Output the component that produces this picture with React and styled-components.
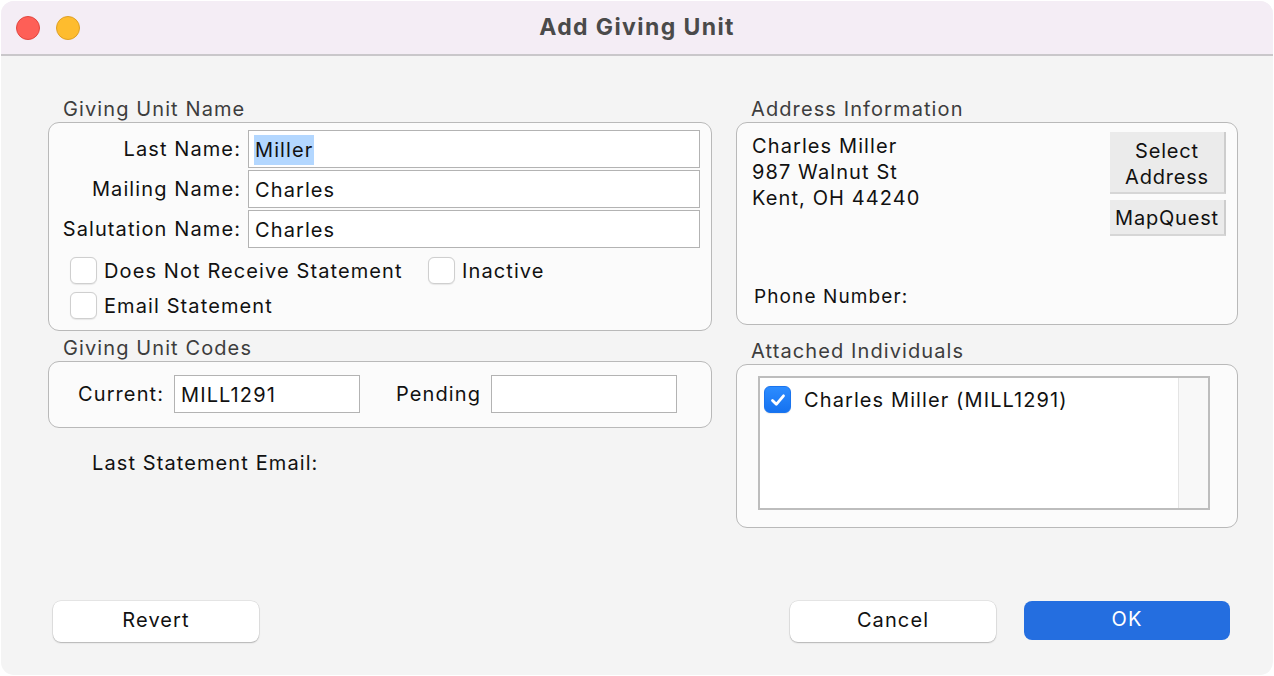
import React from "react";
import styled, { createGlobalStyle } from "styled-components";

const GlobalStyle = createGlobalStyle`
  html, body {
    margin: 0;
    padding: 0;
    background: #ffffff;
  }
  body {
    font-family: Inter, "Liberation Sans", sans-serif;
    color: #111;
    letter-spacing: 1.1px;
  }
`;

export default function App() {
  return (
    <>
      <GlobalStyle />
      <Window>
        <TitleBar>
          <Lights>
            <Light color="#fe5f57" edge="#e2463f" />
            <Light color="#febc2e" edge="#dfa024" />
          </Lights>
          <Title>Add Giving Unit</Title>
        </TitleBar>
        <Body>
          <Columns>
            <Column>
              <Group>
                <Legend>Giving Unit Name</Legend>
                <Box pad="7px 11px 11px 13px">
                  <NameGrid>
                    <FieldLabel>Last Name:</FieldLabel>
                    <TextField>
                      <Selected>Miller</Selected>
                    </TextField>
                    <FieldLabel>Mailing Name:</FieldLabel>
                    <TextField>Charles</TextField>
                    <FieldLabel>Salutation Name:</FieldLabel>
                    <TextField>Charles</TextField>
                  </NameGrid>
                  <CheckGrid>
                    <CheckItem>
                      <CheckBox />
                      <span>Does Not Receive Statement</span>
                    </CheckItem>
                    <CheckItem>
                      <CheckBox />
                      <span>Inactive</span>
                    </CheckItem>
                    <CheckItem>
                      <CheckBox />
                      <span>Email Statement</span>
                    </CheckItem>
                  </CheckGrid>
                </Box>
              </Group>
              <Group top="4px">
                <Legend>Giving Unit Codes</Legend>
                <Box pad="13px 0 14px 29px">
                  <CodeRow>
                    <CodeLabel>Current:</CodeLabel>
                    <TextField width="186px">MILL1291</TextField>
                    <CodeLabel gap="36px">Pending</CodeLabel>
                    <TextField width="186px" />
                  </CodeRow>
                </Box>
              </Group>
              <Note>Last Statement Email:</Note>
            </Column>

            <Column>
              <Group>
                <Legend>Address Information</Legend>
                <Box pad="9px 11px 16px 15px">
                  <AddressTop>
                    <AddressText>
                      <div>Charles Miller</div>
                      <div>987 Walnut St</div>
                      <div>Kent, OH 44240</div>
                    </AddressText>
                    <SideButtons>
                      <FlatButton h="62px" lift="4px">
                        Select
                        <br />
                        Address
                      </FlatButton>
                      <FlatButton h="36px" lift="2px">
                        MapQuest
                      </FlatButton>
                    </SideButtons>
                  </AddressTop>
                  <Phone>Phone Number:</Phone>
                </Box>
              </Group>
              <Group top="13px">
                <Legend>Attached Individuals</Legend>
                <Box pad="11px 27px 17px 21px">
                  <ListBox>
                    <ListItems>
                      <ListRow>
                        <CheckBox checked>
                          <svg width="20" height="20" viewBox="0 0 20 20">
                            <path
                              d="M4.5 10.5 L8.3 14.3 L15.5 5.8"
                              fill="none"
                              stroke="#fff"
                              strokeWidth="2.8"
                              strokeLinecap="round"
                              strokeLinejoin="round"
                            />
                          </svg>
                        </CheckBox>
                        <span>Charles Miller (MILL1291)</span>
                      </ListRow>
                    </ListItems>
                    <ScrollTrack />
                  </ListBox>
                </Box>
              </Group>
            </Column>
          </Columns>

          <Footer>
            <PushButton>Revert</PushButton>
            <FooterRight>
              <PushButton>Cancel</PushButton>
              <PushButton primary>OK</PushButton>
            </FooterRight>
          </Footer>
        </Body>
      </Window>
    </>
  );
}

const Window = styled.div`
  box-sizing: border-box;
  width: 1272px;
  height: 674px;
  margin: 1px;
  border-radius: 13px;
  overflow: hidden;
  background: #f4f4f4;
  display: flex;
  flex-direction: column;
`;

const TitleBar = styled.div`
  height: 53px;
  flex-shrink: 0;
  background: #f4edf5;
  border-bottom: 2px solid #c9c7ca;
  display: flex;
  align-items: center;
  justify-content: center;
  position: relative;
`;

const Lights = styled.div`
  position: absolute;
  left: 15px;
  top: 15px;
  display: flex;
  gap: 16px;
`;

const Light = styled.span`
  box-sizing: border-box;
  width: 24px;
  height: 24px;
  border-radius: 50%;
  background: ${(p) => p.color};
  border: 1px solid ${(p) => p.edge};
`;

const Title = styled.div`
  font-size: 23px;
  font-weight: 700;
  letter-spacing: 1.4px;
  color: #4a4a4a;
  margin-top: -2px;
`;

const Body = styled.div`
  flex: 1;
  display: flex;
  flex-direction: column;
  padding: 40px 34px 33px 47px;
`;

const Columns = styled.div`
  display: grid;
  grid-template-columns: 664px 502px;
  column-gap: 24px;
  align-items: start;
`;

const Column = styled.div`
  display: flex;
  flex-direction: column;
`;

const Group = styled.div`
  display: flex;
  flex-direction: column;
  margin-top: ${(p) => p.top || "0"};
`;

const Legend = styled.div`
  font-size: 20px;
  color: #3d3d3d;
  line-height: 26px;
  margin-left: 15px;
`;

const Box = styled.div`
  box-sizing: border-box;
  background: #fbfbfb;
  border: 1px solid #b9b9b9;
  border-radius: 11px;
  padding: ${(p) => p.pad};
`;

const NameGrid = styled.div`
  display: grid;
  grid-template-columns: 178px 1fr;
  column-gap: 8px;
  row-gap: 2px;
  align-items: center;
`;

const FieldLabel = styled.div`
  font-size: 20px;
  text-align: right;
  color: #111;
  white-space: nowrap;
  margin-right: -1px;
`;

const TextField = styled.div`
  box-sizing: border-box;
  height: 38px;
  width: ${(p) => p.width || "auto"};
  background: #fff;
  border: 1px solid #b3b3b3;
  padding: 2px 6px 0;
  font-size: 20px;
  display: flex;
  align-items: center;
  color: #111;
`;

const Selected = styled.span`
  background: #b3d7ff;
  padding: 3px 1px;
  margin-left: -1px;
`;

const CheckGrid = styled.div`
  display: grid;
  grid-template-columns: 358px auto;
  row-gap: 8px;
  margin-top: 9px;
  padding-left: 8px;
`;

const CheckItem = styled.label`
  display: flex;
  align-items: center;
  gap: 7px;
  font-size: 20px;
  height: 27px;
  color: #111;
`;

const CheckBox = styled.span`
  box-sizing: border-box;
  width: 27px;
  height: 27px;
  flex-shrink: 0;
  border-radius: 6px;
  display: inline-flex;
  align-items: center;
  justify-content: center;
  background: ${(p) =>
    p.checked ? "linear-gradient(#2c8cff, #1572f0)" : "#ffffff"};
  border: 1px solid ${(p) => (p.checked ? "#1a74ee" : "#cfcfcf")};
  box-shadow: 0 0.5px 1px rgba(0, 0, 0, 0.08);
`;

const CodeRow = styled.div`
  display: flex;
  align-items: center;
`;

const CodeLabel = styled.div`
  font-size: 20px;
  margin-left: ${(p) => p.gap || "0"};
  margin-right: 10px;
`;

const Note = styled.div`
  font-size: 20px;
  margin: 23px 0 0 44px;
`;

const AddressTop = styled.div`
  display: flex;
  justify-content: space-between;
  align-items: flex-start;
`;

const AddressText = styled.div`
  font-size: 20px;
  line-height: 26px;
  margin-top: 1px;
`;

const SideButtons = styled.div`
  display: flex;
  flex-direction: column;
  gap: 6px;
`;

const FlatButton = styled.div`
  box-sizing: border-box;
  width: 116px;
  height: ${(p) => p.h};
  padding-top: ${(p) => p.lift};
  background: #ebebeb;
  border-right: 2px solid #cdcdcd;
  border-bottom: 2px solid #d6d6d6;
  font-size: 20px;
  line-height: 26px;
  letter-spacing: 0.8px;
  text-align: center;
  display: flex;
  align-items: center;
  justify-content: center;
  color: #111;
`;

const Phone = styled.div`
  font-size: 19px;
  margin: 49px 0 0 2px;
`;

const ListBox = styled.div`
  box-sizing: border-box;
  height: 134px;
  border: 2px solid #bdbdbd;
  background: #fff;
  display: flex;
`;

const ListItems = styled.div`
  flex: 1;
  padding: 8px 4px;
`;

const ListRow = styled.div`
  display: flex;
  align-items: center;
  gap: 13px;
  font-size: 20px;
`;

const ScrollTrack = styled.div`
  width: 29px;
  background: #f8f8f8;
  border-left: 1px solid #e4e4e4;
`;

const Footer = styled.div`
  margin-top: auto;
  display: flex;
  justify-content: space-between;
  align-items: flex-start;
  padding: 0 9px 0 5px;
`;

const FooterRight = styled.div`
  display: flex;
  gap: 28px;
`;

const PushButton = styled.button`
  box-sizing: border-box;
  width: 206px;
  height: ${(p) => (p.primary ? "39px" : "41px")};
  border-radius: 8px;
  font-family: inherit;
  font-size: 20px;
  letter-spacing: 1.1px;
  border: none;
  padding: 0 0 4px;
  color: ${(p) => (p.primary ? "#fff" : "#111")};
  background: ${(p) => (p.primary ? "#246ee0" : "#ffffff")};
  box-shadow: ${(p) =>
    p.primary
      ? "none"
      : "0 0 0 0.5px rgba(0,0,0,0.12), 0 1px 1.5px rgba(0,0,0,0.22)"};
`;
